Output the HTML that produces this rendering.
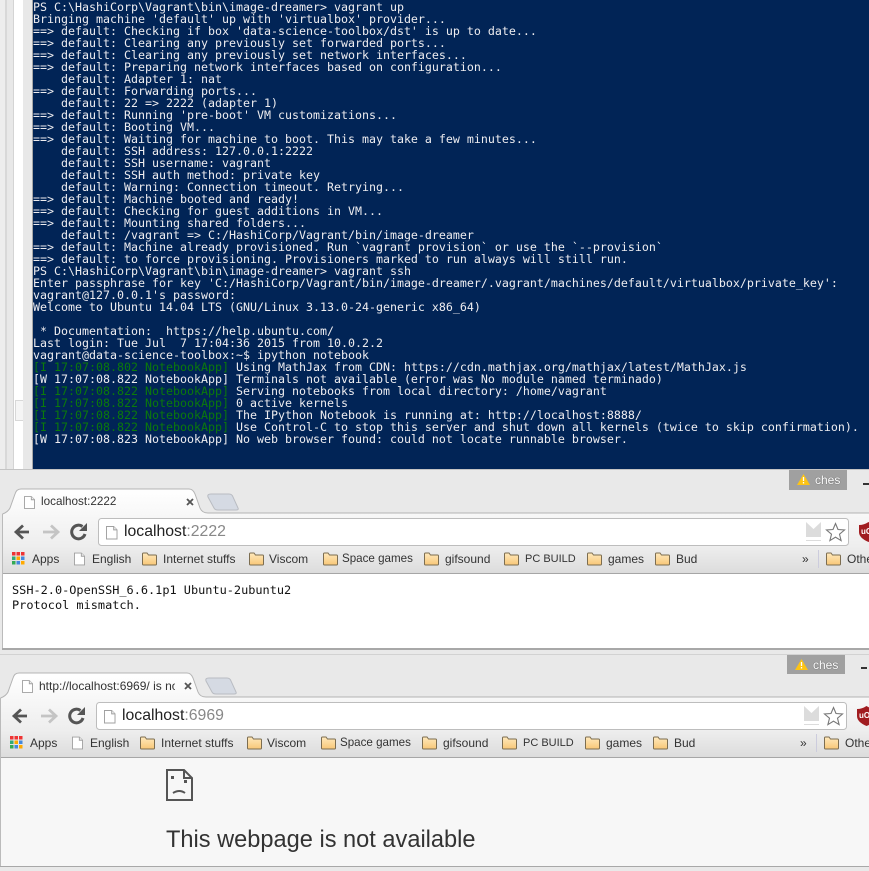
<!DOCTYPE html>
<html><head><meta charset="utf-8">
<style>
html,body{margin:0;padding:0;background:#e9e9e9;width:869px;height:871px;overflow:hidden}
body{font-family:"Liberation Sans",sans-serif}
#root{position:absolute;left:0;top:0;width:869px;height:871px;overflow:hidden;background:#e9e9e9}
.a{position:absolute}
#term{left:33px;top:0;width:836px;height:469px;background:#012456;color:#eeedf0;font:11.64px/12px "DejaVu Sans Mono",monospace;white-space:pre;padding-top:1px;box-sizing:border-box;font-weight:400;overflow:hidden}
#term i{font-style:normal;color:#0b7a0b}
.win{position:absolute;left:0;top:0;overflow:hidden}
.t{position:absolute;white-space:nowrap;color:#222}
.bm{font-size:12px;line-height:14px;top:552px;color:#333}
svg{position:absolute}
</style></head><body><div id="root">
<svg width="0" height="0" style="position:absolute;left:0;top:0">
<defs>
<linearGradient id="fg" x1="0" y1="0" x2="0" y2="1"><stop offset="0" stop-color="#ffe9bd"/><stop offset="1" stop-color="#f8c777"/></linearGradient>
<linearGradient id="tb" x1="0" y1="0" x2="0" y2="1"><stop offset="0" stop-color="#f8f8f8"/><stop offset=".55" stop-color="#eeeeee"/><stop offset="1" stop-color="#dcdcdc"/></linearGradient>
<linearGradient id="tg" x1="0" y1="0" x2="0" y2="1"><stop offset="0" stop-color="#fff"/><stop offset="1" stop-color="#f8f8f8"/></linearGradient>
<symbol id="fold" viewBox="0 0 15 14"><path d="M.5 12V2q0-1 1-1h3.500l1.500 2h7q1 0 1 1v8q0 1-1 1h-12q-1 0-1-1z" fill="url(#fg)" stroke="#7c6d50"/></symbol>
<symbol id="page" viewBox="0 0 12 14"><path d="M.5.5h7.500l3.500 3.500v9.500h-11z" fill="#fff" stroke="#a0a0a0"/><path d="M8 .5v3.500h3.500" fill="#eee" stroke="#a0a0a0"/></symbol>
<symbol id="chrome" viewBox="0 470 871 105">
  <rect x="3" y="513" width="868" height="60" fill="url(#tb)"/>
  <path d="M2.500 514Q8 512 10 508L15 494Q16.500 489 21 489H189Q193 489 195 494L200 508Q202 513 208 513H871" fill="url(#tg)" stroke="#b4b4b4"/>
  <path d="M211 494H229Q232 494 233 497L238 508Q239 510 236 510H218Q215 510 214 508L208 497Q207 494 211 494z" fill="#d5dae3" stroke="#b9bcc2"/>
  <rect x="3" y="573" width="868" height="1" fill="#a6a6a6"/>
  <rect x="98.500" y="518.500" width="750" height="27" rx="3" fill="#fff" stroke="#bdbdbd"/>
  <path d="M187 499l6 6M193 499l-6 6" stroke="#555" stroke-width="1.800"/>
  <path d="M29 532H18M23 525.500L16 532l7 6.500" fill="none" stroke="#555" stroke-width="2.800"/>
  <path d="M43 532h13M51 525.500l7 6.500-7 6.500" fill="none" stroke="#c4c4c4" stroke-width="2.800"/>
  <path d="M85 534A6.800 6.800 0 1 1 82.500 526.500" fill="none" stroke="#555" stroke-width="3"/>
  <path d="M79 531h8v-8z" fill="#555"/>
  <path d="M806 522l7.500 7 7.500-7v15h-15z" fill="#dcdcdc"/><rect x="806" y="540" width="15" height="1" fill="#dcdcdc"/>
  <path d="M835.500 523.500l2.500 6 6.500.5-5 4.200 1.600 6.400-5.600-3.500-5.600 3.500 1.600-6.400-5-4.200 6.500-.5z" fill="#fff" stroke="#777" stroke-width="1.100"/>
  <path d="M859 525q5 0 9.500-3 4.500 3 9.500 3v7q0 6-9.500 10-9.500-4-9.500-10z" fill="#a11c20"/>
  <rect x="12" y="552" width="3.500" height="3.500" fill="#e33"/><rect x="16.500" y="552" width="3.500" height="3.500" fill="#e33"/><rect x="21" y="552" width="3.500" height="3.500" fill="#e33"/>
  <rect x="12" y="556.500" width="3.500" height="3.500" fill="#3a7"/><rect x="16.500" y="556.500" width="3.500" height="3.500" fill="#fa0"/><rect x="21" y="556.500" width="3.500" height="3.500" fill="#48d"/>
  <rect x="12" y="561" width="3.500" height="3.500" fill="#3a5"/><rect x="16.500" y="561" width="3.500" height="3.500" fill="#48d"/><rect x="21" y="561" width="3.500" height="3.500" fill="#fa0"/>
  <use href="#page" x="24" y="496" width="11" height="13"/>
  <use href="#page" x="106" y="526" width="11.500" height="13.500"/>
  <use href="#page" x="74" y="552" width="11" height="14"/>
  <use href="#fold" x="142" y="552" width="15" height="14"/>
  <use href="#fold" x="249" y="552" width="15" height="14"/>
  <use href="#fold" x="323" y="552" width="15" height="14"/>
  <use href="#fold" x="424" y="552" width="15" height="14"/>
  <use href="#fold" x="504" y="552" width="15" height="14"/>
  <use href="#fold" x="587" y="552" width="15" height="14"/>
  <use href="#fold" x="655" y="552" width="15" height="14"/>
  <use href="#fold" x="826" y="552" width="15" height="14"/>
  <rect x="818" y="550" width="1" height="18" fill="#ccd"/>
  <rect x="863" y="483" width="6" height="2" fill="#333"/>
</symbol>
</defs></svg>

<!-- left strips -->
<div class="a" style="left:0;top:0;width:5px;height:469px;background:#ededed"></div>
<div class="a" style="left:5px;top:0;width:2px;height:469px;background:#d8d8d8"></div>
<div class="a" style="left:7px;top:0;width:6px;height:469px;background:#e8e8e8"></div>
<div class="a" style="left:13px;top:0;width:1px;height:469px;background:#d4d4d4"></div>
<div class="a" style="left:14px;top:0;width:9px;height:469px;background:#fff"></div>
<div class="a" style="left:15px;top:400px;width:8px;height:21px;box-sizing:border-box;background:#f5f5f5;border:1px solid #d8d8d8;border-right:0"></div>
<div class="a" style="left:23px;top:0;width:9px;height:469px;background:#e8e8e8"></div>
<div class="a" style="left:32px;top:0;width:1px;height:469px;background:#a8a8a8"></div>

<div id="term" class="a">PS C:\HashiCorp\Vagrant\bin\image-dreamer&gt; vagrant up
Bringing machine 'default' up with 'virtualbox' provider...
==&gt; default: Checking if box 'data-science-toolbox/dst' is up to date...
==&gt; default: Clearing any previously set forwarded ports...
==&gt; default: Clearing any previously set network interfaces...
==&gt; default: Preparing network interfaces based on configuration...
    default: Adapter 1: nat
==&gt; default: Forwarding ports...
    default: 22 =&gt; 2222 (adapter 1)
==&gt; default: Running 'pre-boot' VM customizations...
==&gt; default: Booting VM...
==&gt; default: Waiting for machine to boot. This may take a few minutes...
    default: SSH address: 127.0.0.1:2222
    default: SSH username: vagrant
    default: SSH auth method: private key
    default: Warning: Connection timeout. Retrying...
==&gt; default: Machine booted and ready!
==&gt; default: Checking for guest additions in VM...
==&gt; default: Mounting shared folders...
    default: /vagrant =&gt; C:/HashiCorp/Vagrant/bin/image-dreamer
==&gt; default: Machine already provisioned. Run `vagrant provision` or use the `--provision`
==&gt; default: to force provisioning. Provisioners marked to run always will still run.
PS C:\HashiCorp\Vagrant\bin\image-dreamer&gt; vagrant ssh
Enter passphrase for key 'C:/HashiCorp/Vagrant/bin/image-dreamer/.vagrant/machines/default/virtualbox/private_key':
vagrant@127.0.0.1's password:
Welcome to Ubuntu 14.04 LTS (GNU/Linux 3.13.0-24-generic x86_64)

 * Documentation:  https://help.ubuntu.com/
Last login: Tue Jul  7 17:04:36 2015 from 10.0.2.2
vagrant@data-science-toolbox:~$ ipython notebook
<i>[I 17:07:08.802 NotebookApp]</i> Using MathJax from CDN: https://cdn.mathjax.org/mathjax/latest/MathJax.js
[W 17:07:08.822 NotebookApp] Terminals not available (error was No module named terminado)
<i>[I 17:07:08.822 NotebookApp]</i> Serving notebooks from local directory: /home/vagrant
<i>[I 17:07:08.822 NotebookApp]</i> 0 active kernels
<i>[I 17:07:08.822 NotebookApp]</i> The IPython Notebook is running at: http://localhost:8888/
<i>[I 17:07:08.822 NotebookApp]</i> Use Control-C to stop this server and shut down all kernels (twice to skip confirmation).
[W 17:07:08.823 NotebookApp] No web browser found: could not locate runnable browser.</div>
<div class="a" style="left:0;top:469px;width:869px;height:1px;background:#c4c4c4"></div>

<!-- WINDOW 1 -->
<div class="win" style="width:869px;height:660px">
 <svg style="left:0;top:0" width="869" height="660">
  <rect x="2" y="514" width="1" height="134" fill="#bbb"/>
  <rect x="3" y="574" width="866" height="74" fill="#fff"/>
  <rect x="2" y="648" width="867" height="2" fill="#a8a8a8"/>
  <use href="#chrome" x="0" y="470" width="871" height="105"/>
  <rect x="789" y="470" width="58" height="20" fill="#a0a0a0"/>
  <path d="M803.500 474l6.500 11h-13z" fill="#fdc414"/><path d="M803.500 477v4M803.500 482v1.500" stroke="#fff" stroke-width="1.300"/>
 </svg>
 <div class="t" style="left:861px;top:527px;font:bold 8px/10px 'Liberation Sans',sans-serif;color:#fff">uO</div>
 <div class="t" style="left:815px;top:473px;font-size:12px;line-height:14px;color:#fff;text-shadow:0 0 1px #444">ches</div>
 <div class="t" style="left:41px;top:495px;font-size:11.700px;line-height:14px;color:#333">localhost:2222</div>
 <div class="t" style="left:124px;top:523px;font-size:15.800px;line-height:18px;color:#222">localhost<span style="color:#888">:2222</span></div>
 <div class="t bm" style="left:32px">Apps</div>
 <div class="t bm" style="left:92px">English</div>
 <div class="t bm" style="left:163px">Internet stuffs</div>
 <div class="t bm" style="left:269px">Viscom</div>
 <div class="t bm" style="left:342px;font-size:11.600px">Space games</div>
 <div class="t bm" style="left:445px">gifsound</div>
 <div class="t bm" style="left:525px;font-size:11px">PC BUILD</div>
 <div class="t bm" style="left:608px">games</div>
 <div class="t bm" style="left:676px">Bud</div>
 <div class="t bm" style="left:802px">»</div>
 <div class="t bm" style="left:847px">Other</div>
 <div class="t" style="left:12px;top:583px;font:11.9px/15px 'DejaVu Sans Mono',monospace;color:#111;white-space:pre">SSH-2.0-OpenSSH_6.6.1p1 Ubuntu-2ubuntu2
Protocol mismatch.</div>
</div>

<div class="a" style="left:0;top:654px;width:869px;height:1px;background:#d2d2d2"></div>

<!-- WINDOW 2 -->
<div class="win" style="width:871px;height:687px;transform:translate(-2px,184px)">
 <svg style="left:0;top:0" width="871" height="687">
  <rect x="2" y="514" width="1" height="168" fill="#bbb"/>
  <rect x="3" y="574" width="868" height="108" fill="#f7f7f7"/>
  <rect x="2" y="682" width="869" height="1" fill="#a8a8a8"/>
  <use href="#chrome" x="0" y="470" width="871" height="105"/>
  <rect x="789" y="471" width="58" height="19" fill="#a0a0a0"/>
  <path d="M803.500 475l6.500 11h-13z" fill="#fdc414"/><path d="M803.500 478v4M803.500 483v1.500" stroke="#fff" stroke-width="1.300"/>
  <path d="M169 586H186L194 594V616H169z" fill="none" stroke="#555" stroke-width="2"/>
  <path d="M186 586v8h8" fill="none" stroke="#555" stroke-width="2"/>
  <rect x="173" y="592" width="3" height="3" fill="#555"/><rect x="186" y="596" width="3" height="3" fill="#555"/>
  <path d="M175 609q6.500-4 12 0" fill="none" stroke="#555" stroke-width="2"/>
 </svg>
 <div class="t" style="left:861px;top:527px;font:bold 8px/10px 'Liberation Sans',sans-serif;color:#fff">uO</div>
 <div class="t" style="left:815px;top:474px;font-size:12px;line-height:14px;color:#fff;text-shadow:0 0 1px #444">ches</div>
 <div style="position:absolute;left:41px;top:495px;width:136px;overflow:hidden;white-space:nowrap;font-size:12px;line-height:14px;color:#333">http://localhost:6969/ is not available</div>
 <div class="t" style="left:124px;top:523px;font-size:15.800px;line-height:18px;color:#222">localhost<span style="color:#888">:6969</span></div>
 <div class="t bm" style="left:32px">Apps</div>
 <div class="t bm" style="left:92px">English</div>
 <div class="t bm" style="left:163px">Internet stuffs</div>
 <div class="t bm" style="left:269px">Viscom</div>
 <div class="t bm" style="left:342px;font-size:11.600px">Space games</div>
 <div class="t bm" style="left:445px">gifsound</div>
 <div class="t bm" style="left:525px;font-size:11px">PC BUILD</div>
 <div class="t bm" style="left:608px">games</div>
 <div class="t bm" style="left:676px">Bud</div>
 <div class="t bm" style="left:802px">»</div>
 <div class="t bm" style="left:847px">Other</div>
 <div class="t" style="left:168px;top:642px;font-size:23.600px;line-height:28px;color:#333">This webpage is not available</div>
</div>
</div></body></html>
